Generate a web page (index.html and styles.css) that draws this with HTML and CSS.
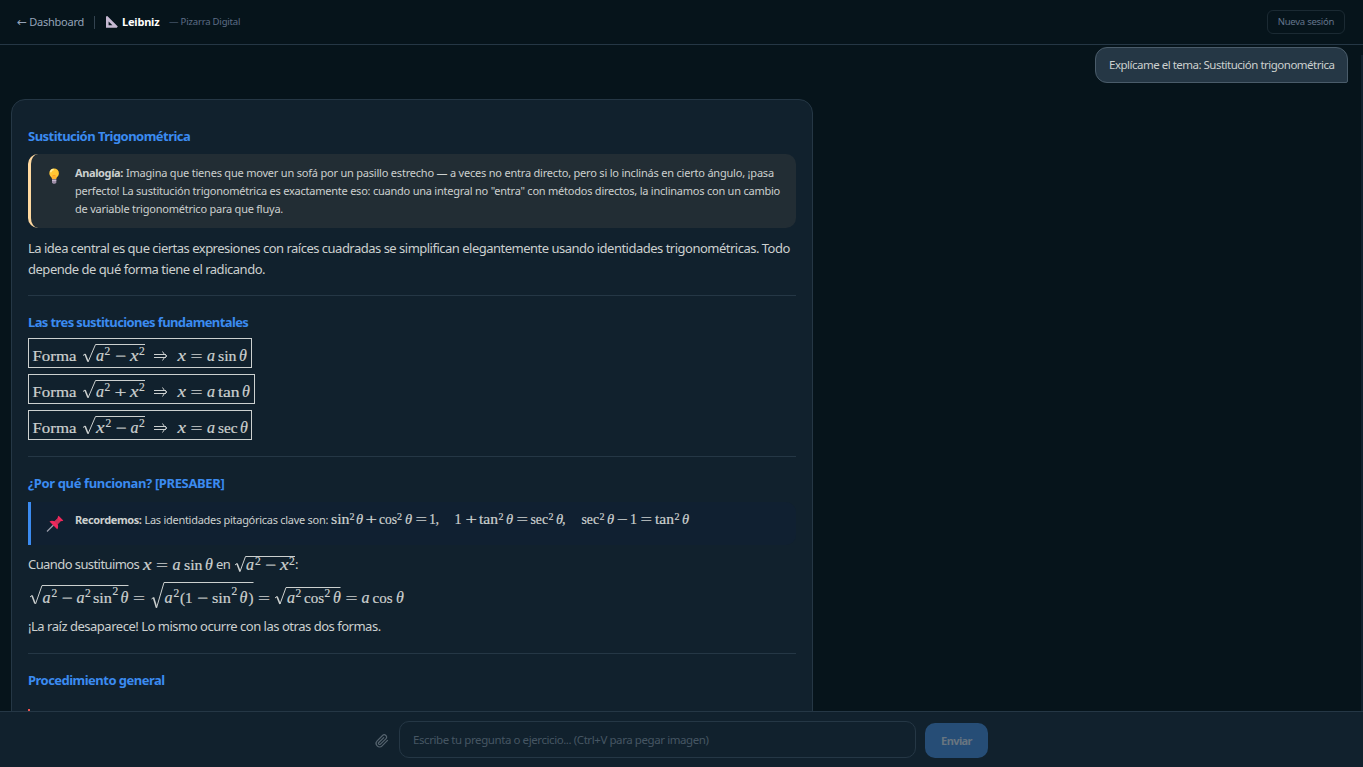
FILE: index.html
```html
<!DOCTYPE html>
<html lang="es">
<head>
<meta charset="utf-8">
<title>Leibniz — Pizarra Digital</title>
<link rel="stylesheet" href="styles.css">
</head>
<body>
<div class="app">
  <header class="topbar">
    <a class="back"><span class="arrow">←</span><span>Dashboard</span></a>
    <span class="divider"></span>
    <svg class="logo" width="12" height="12" viewBox="0 0 12 12"><path fill="#c6b9d2" fill-rule="evenodd" d="M0 0.6 L1.3 0 L11.8 10.6 L10.8 11.8 L0 11.8 Z M2.6 5.6 V9.3 H6.4 Z"/></svg>
    <strong class="brand">Leibniz</strong>
    <span class="tagline">— Pizarra Digital</span>
    <button class="new-session">Nueva sesión</button>
  </header>

  <main class="chat">
    <div class="scrollbar"></div>
    <div class="question">Explícame el tema: Sustitución trigonométrica</div>
    <article class="answer">
      <h3 class="title t1">Sustitución Trigonométrica</h3>
      <div class="callout analogy">
        <svg class="callout-icon" width="18" height="22" viewBox="0 0 18 22"><path d="M4.3 7.2a4.8 4.8 0 0 1 9.6 0c0 2-1 3-2 4.1-.5.7-.6 1.3-.6 1.900H7c0-.7-.2-1.400-.7-2-1-1.100-2-2-2-4z" fill="#ffc634"/><path d="M5.700 6.200a3 3 0 0 1 3-2.700" stroke="#fff0a0" stroke-width="1.500" fill="none"/><path d="M8 13V9l1 1 1-1v4" stroke="#ff9425" stroke-width=".8" fill="none"/><path d="M7 13.200h4.300v3l-1 1.500H8l-1-1.500z" fill="#9b8ba4"/><path d="M7 14.600h4.300" stroke="#d8cce0" stroke-width=".8"/></svg>
        <p class="note"><b>Analogía:</b> <span class="n1">Imagina que tienes que mover un sofá por un pasillo estrecho — a veces no entra directo, pero si lo inclinás en cierto ángulo, ¡pasa</span><br><span class="n2">perfecto! La sustitución trigonométrica es exactamente eso: cuando una integral no "entra" con métodos directos, la inclinamos con un cambio</span><br><span class="n2">de variable trigonométrico para que fluya.</span></p>
      </div>
      <p class="para intro">La idea central es que ciertas expresiones con raíces cuadradas se simplifican elegantemente usando identidades trigonométricas. Todo<br><span class="p2">depende de qué forma tiene el radicando.</span></p>
      <hr>
      <h3 class="title t2">Las tres sustituciones fundamentales</h3>
      <div class="forms">
        <svg class="math boxed" width="224" height="30" viewBox="28 338 224 30">
          <rect x="28.500" y="338.500" width="223" height="29"/>
          <text x="32.500" y="360.500" textLength="44" lengthAdjust="spacingAndGlyphs">Forma</text>
          <path class="tick" d="M83 355.500l2-1.500"/><path class="stem" d="M85 354l3 7.500"/><path class="tick" d="M88 362l7.500-17.500H145"/>
          <text class="v" x="96" y="360.500">a</text><text class="s" x="104.500" y="355">2</text>
          <text x="115" y="360.500" textLength="11" lengthAdjust="spacingAndGlyphs">−</text>
          <text class="v" x="130" y="360.500" textLength="8.500" lengthAdjust="spacingAndGlyphs">x</text><text class="s" x="139" y="355">2</text>
          <path class="tick" d="M154 354.500h12M154 357.500h12M162.500 351.500q1.500 3.500 4.500 4.500q-3 1-4.500 4.500"/>
          <text class="v" x="177.500" y="360.500" textLength="8.500" lengthAdjust="spacingAndGlyphs">x</text><text x="190.500" y="360.500" textLength="12" lengthAdjust="spacingAndGlyphs">=</text>
          <text class="v" x="207" y="360.500">a</text><text x="218" y="360.500" textLength="18.500" lengthAdjust="spacingAndGlyphs">sin</text><text class="v" x="239" y="360.500">θ</text>
        </svg>
        <svg class="math boxed" width="227" height="30" viewBox="28 338 227 30">
          <rect x="28.500" y="338.500" width="226" height="29"/>
          <text x="32.500" y="360.500" textLength="44" lengthAdjust="spacingAndGlyphs">Forma</text>
          <path class="tick" d="M83 355.500l2-1.500"/><path class="stem" d="M85 354l3 7.500"/><path class="tick" d="M88 362l7.500-17.500H145"/>
          <text class="v" x="96" y="360.500">a</text><text class="s" x="104.500" y="355">2</text>
          <text x="114.500" y="360.500" textLength="12" lengthAdjust="spacingAndGlyphs">+</text>
          <text class="v" x="130" y="360.500" textLength="8.500" lengthAdjust="spacingAndGlyphs">x</text><text class="s" x="139" y="355">2</text>
          <path class="tick" d="M154 354.500h12M154 357.500h12M162.500 351.500q1.500 3.500 4.500 4.500q-3 1-4.500 4.500"/>
          <text class="v" x="177.500" y="360.500" textLength="8.500" lengthAdjust="spacingAndGlyphs">x</text><text x="190.500" y="360.500" textLength="12" lengthAdjust="spacingAndGlyphs">=</text>
          <text class="v" x="207" y="360.500">a</text><text x="218" y="360.500" textLength="21.500" lengthAdjust="spacingAndGlyphs">tan</text><text class="v" x="242" y="360.500">θ</text>
        </svg>
        <svg class="math boxed" width="224" height="30" viewBox="28 338 224 30">
          <rect x="28.500" y="338.500" width="223" height="29"/>
          <text x="32.500" y="360.500" textLength="44" lengthAdjust="spacingAndGlyphs">Forma</text>
          <path class="tick" d="M83 355.500l2-1.500"/><path class="stem" d="M85 354l3 7.500"/><path class="tick" d="M88 362l7.500-17.500H145"/>
          <text class="v" x="96" y="360.500" textLength="8.500" lengthAdjust="spacingAndGlyphs">x</text><text class="s" x="105.500" y="355">2</text>
          <text x="115.500" y="360.500" textLength="11" lengthAdjust="spacingAndGlyphs">−</text>
          <text class="v" x="130.500" y="360.500">a</text><text class="s" x="139" y="355">2</text>
          <path class="tick" d="M154 354.500h12M154 357.500h12M162.500 351.500q1.500 3.500 4.500 4.500q-3 1-4.500 4.500"/>
          <text class="v" x="177.500" y="360.500" textLength="8.500" lengthAdjust="spacingAndGlyphs">x</text><text x="190.500" y="360.500" textLength="12" lengthAdjust="spacingAndGlyphs">=</text>
          <text class="v" x="207" y="360.500">a</text><text x="218" y="360.500" textLength="19.500" lengthAdjust="spacingAndGlyphs">sec</text><text class="v" x="240" y="360.500">θ</text>
        </svg>
      </div>
      <hr>
      <h3 class="title t3">¿Por qué funcionan? [PRESABER]</h3>
      <div class="callout reminder">
        <svg class="callout-icon pin" width="18" height="18" viewBox="0 0 18 18"><path d="M1 16.500L7.500 10" stroke="#9a9cab" stroke-width="1.300"/><path d="M3.500 6.500c1.500-1.200 3.600-.9 5-.3l3.300-3.200c-.3-1 .1-1.700.8-2.300l4.700 4.700c-.7.7-1.500 1-2.400.7l-3.200 3.200c.6 1.600.7 3.700-.5 5z" fill="#f0285c"/><path d="M8.700 6.800l3.200-3.200 2.600 2.600-3.200 3.200z" fill="#c92f58"/></svg>
        <p class="note"><b>Recordemos:</b> <span class="n4">Las identidades pitagóricas clave son:</span></p>
        <svg class="math small" width="360" height="22" viewBox="331 509 360 22">
          <text x="331" y="524" textLength="18.500" lengthAdjust="spacingAndGlyphs">sin</text><text class="s" x="349.500" y="520">2</text><text class="v" x="356" y="524">θ</text>
          <text x="365.500" y="524" textLength="11.500" lengthAdjust="spacingAndGlyphs">+</text>
          <text x="379" y="524" textLength="18" lengthAdjust="spacingAndGlyphs">cos</text><text class="s" x="397" y="520">2</text><text class="v" x="405" y="524">θ</text>
          <text x="415.500" y="524" textLength="11.500" lengthAdjust="spacingAndGlyphs">=</text><text x="429" y="524">1</text><text x="435.500" y="524">,</text>
          <text x="454.500" y="524">1</text><text x="465.500" y="524" textLength="11.500" lengthAdjust="spacingAndGlyphs">+</text>
          <text x="479" y="524" textLength="19" lengthAdjust="spacingAndGlyphs">tan</text><text class="s" x="498.500" y="520">2</text><text class="v" x="506" y="524">θ</text>
          <text x="516.500" y="524" textLength="11.500" lengthAdjust="spacingAndGlyphs">=</text>
          <text x="530.500" y="524" textLength="17.500" lengthAdjust="spacingAndGlyphs">sec</text><text class="s" x="548.500" y="520">2</text><text class="v" x="556" y="524">θ</text><text x="562" y="524">,</text>
          <text x="581.500" y="524" textLength="17.500" lengthAdjust="spacingAndGlyphs">sec</text><text class="s" x="599.500" y="520">2</text><text class="v" x="607" y="524">θ</text>
          <text x="617" y="524" textLength="11" lengthAdjust="spacingAndGlyphs">−</text><text x="630" y="524">1</text><text x="640.500" y="524" textLength="11.500" lengthAdjust="spacingAndGlyphs">=</text>
          <text x="655" y="524" textLength="19" lengthAdjust="spacingAndGlyphs">tan</text><text class="s" x="674.500" y="520">2</text><text class="v" x="682" y="524">θ</text>
        </svg>
      </div>
      <div class="para mixed"><span class="p3">Cuando sustituimos</span>
        <svg class="math m-x" width="70" height="24" viewBox="143 552 70 24">
          <text class="v" x="143" y="569.500" textLength="8.500" lengthAdjust="spacingAndGlyphs">x</text><text x="156" y="569.500" textLength="12" lengthAdjust="spacingAndGlyphs">=</text><text class="v" x="172.500" y="569.500">a</text><text x="184" y="569.500" textLength="18.500" lengthAdjust="spacingAndGlyphs">sin</text><text class="v" x="205" y="569.500">θ</text>
        </svg><span class="p4">en</span>
        <svg class="math m-r" width="61" height="24" viewBox="234 552 61 24">
          <path class="tick" d="M235 565l2-1.500"/><path class="stem" d="M237 563.500l3 8"/><path class="tick" d="M240 571.500l5.500-15H295"/>
          <text class="v" x="246" y="569.500">a</text><text class="s" x="255" y="564.500">2</text><text x="265" y="569.500" textLength="11" lengthAdjust="spacingAndGlyphs">−</text><text class="v" x="280" y="569.500" textLength="8.500" lengthAdjust="spacingAndGlyphs">x</text><text class="s" x="289" y="564.500">2</text>
        </svg><span>:</span>
      </div>
      <svg class="math display" width="380" height="32" viewBox="28.500 579 380 32">
        <path class="tick" d="M30.500 597l2-1.500"/><path class="stem" d="M32.500 595.500l3 8"/><path class="tick" d="M36 604l6.500-18.500H129"/>
        <text class="v" x="43" y="602.500">a</text><text class="s" x="52" y="597">2</text><text x="62" y="602.500" textLength="11" lengthAdjust="spacingAndGlyphs">−</text>
        <text class="v" x="77" y="602.500">a</text><text class="s" x="85.500" y="597">2</text><text x="93.500" y="602.500" textLength="19" lengthAdjust="spacingAndGlyphs">sin</text><text class="s" x="113" y="595">2</text><text class="v" x="121" y="602.500">θ</text>
        <text x="133.500" y="602.500" textLength="12" lengthAdjust="spacingAndGlyphs">=</text>
        <path class="tick" d="M152 599l2-1.500"/><path class="stem" d="M154 597.500l3 10"/><path class="tick" d="M157 608l7.500-25.500H254"/>
        <text class="v" x="165" y="602.500">a</text><text class="s" x="174" y="597">2</text><text x="180.500" y="602.500">(</text><text x="185.500" y="602.500">1</text><text x="197.500" y="602.500" textLength="11" lengthAdjust="spacingAndGlyphs">−</text>
        <text x="212.500" y="602.500" textLength="19" lengthAdjust="spacingAndGlyphs">sin</text><text class="s" x="232" y="595">2</text><text class="v" x="240" y="602.500">θ</text><text x="249" y="602.500">)</text>
        <text x="258.500" y="602.500" textLength="12" lengthAdjust="spacingAndGlyphs">=</text>
        <path class="tick" d="M275.500 598l2-1.500"/><path class="stem" d="M277.500 596.500l3 7.500"/><path class="tick" d="M280.500 604l6-16.500H341"/>
        <text class="v" x="287.500" y="602.500">a</text><text class="s" x="296" y="597">2</text><text x="304.500" y="602.500" textLength="20" lengthAdjust="spacingAndGlyphs">cos</text><text class="s" x="325" y="597">2</text><text class="v" x="333.500" y="602.500">θ</text>
        <text x="346" y="602.500" textLength="12" lengthAdjust="spacingAndGlyphs">=</text><text class="v" x="362" y="602.500">a</text><text x="373" y="602.500" textLength="20" lengthAdjust="spacingAndGlyphs">cos</text><text class="v" x="396.500" y="602.500">θ</text>
      </svg>
      <p class="para closing">¡La raíz desaparece! Lo mismo ocurre con las otras dos formas.</p>
      <hr>
      <h3 class="title t4">Procedimiento general</h3>
      <div class="warning"></div>
    </article>
  </main>

  <footer class="composer">
    <svg class="clip" width="14" height="14" viewBox="0 0 24 24"><path d="M21.400 11.050l-9.190 9.190a6 6 0 0 1-8.490-8.490l9.190-9.190a4 4 0 0 1 5.660 5.660l-9.200 9.190a2 2 0 0 1-2.830-2.830l8.490-8.480"/></svg>
    <div class="field">Escribe tu pregunta o ejercicio... (Ctrl+V para pegar imagen)</div>
    <button class="send">Enviar</button>
  </footer>
</div>
</body>
</html>
```
FILE: styles.css
```css
* { box-sizing: border-box; }
body { margin: 0; background: #06141b; color: #ccd0cf; font-family: "Noto Sans", sans-serif; font-size: 13px; overflow: hidden; }
.app { display: flex; flex-direction: column; width: 1363px; height: 767px; white-space: nowrap; }
p, h3 { margin: 0; }
button { font-family: inherit; background: none; }

.topbar { display: flex; align-items: center; height: 45px; flex: none; padding: 0 18px 0 17px; border-bottom: 1px solid #253745; }
.back { display: flex; align-items: center; width: 67px; padding-bottom: 1px; color: #94a3b8; font-size: 11px; letter-spacing: -.25px; }
.arrow { width: 13px; font-family: "DejaVu Sans", sans-serif; font-size: 12px; }
.divider { width: 1px; height: 13px; margin-left: 10px; background: #334350; }
.logo { margin-left: 11px; }
.brand { margin-left: 4px; width: 38px; padding-bottom: 1px; color: #fff; font-size: 11px; letter-spacing: -.2px; }
.tagline { margin-left: 9px; padding-bottom: 1px; color: #5d6d86; font-size: 9.500px; letter-spacing: -.18px; }
.new-session { margin-left: auto; width: 78px; height: 24px; padding: 0 0 1px; border: 1px solid #1b2a33; border-radius: 6px; color: #64748b; font-size: 9.500px; letter-spacing: -.25px; }

.chat { position: relative; flex: 1; min-height: 0; overflow: hidden; display: flex; flex-direction: column; padding: 2px 15px 0 11px; }
.scrollbar { position: absolute; right: 0; top: 10px; width: 2px; height: 656px; background: #11212d; }
.question { align-self: flex-end; flex: none; width: 253px; height: 36px; line-height: 34px; padding-left: 13px; border: 1px solid #4a5c6a; border-radius: 12px 12px 2px 12px; background: #253745; font-size: 11.500px; letter-spacing: -.5px; }
.answer { flex: none; width: 802px; height: 640px; margin-top: 16px; padding: 27px 16px 0; border: 1px solid #253745; border-radius: 14px; background: #11212d; }
.title { height: 20px; line-height: 18px; color: #3b8bf0; font-size: 13px; font-weight: 700; letter-spacing: -.53px; }
.callout { display: flex; border-left: 3px solid #3b8bf0; }
.callout-icon { flex: none; }
.note { font-size: 11px; line-height: 18px; }
.note b { letter-spacing: -.38px; }
.n1 { letter-spacing: -.206px; }
.n2 { letter-spacing: -.23px; }
.n4 { letter-spacing: -.28px; }
.analogy { height: 74px; margin-top: 7px; padding: 10px 0 0 14px; border-color: #ffd9a0; border-radius: 10px; background: #222d34; }
.analogy .callout-icon { margin: 2px 12px 0 0; }
.para { font-size: 13px; line-height: 21px; letter-spacing: -.48px; }
.intro { margin-top: 10px; letter-spacing: -.505px; }
.p2 { letter-spacing: -.48px; }
.p3 { width: 111px; letter-spacing: -.58px; }
hr { height: 1px; margin: 0; border: 0; background: #253745; }
.intro + hr { margin-top: 15px; }
.t2, .t3, .t4 { margin-top: 17px; }
.t2 { letter-spacing: -.61px; }
.t3 { letter-spacing: -.37px; }
.forms { display: flex; flex-direction: column; gap: 6px; margin: 5px 0 16px; }
.reminder { height: 43px; margin-top: 8px; padding: 9px 0 0 15px; border-radius: 0 10px 10px 0; background: #102031; }
.reminder .callout-icon { margin: 4px 11px 0 0; }
.small { margin: -2px 0 0 3px; }
.mixed { display: flex; align-items: center; height: 24px; margin-top: 7px; }
.m-x { margin-left: 4px; }
.p4 { margin-left: 3px; width: 15px; }
.m-r { margin-left: 3px; }
.display { display: block; margin-top: 3px; }
.closing { margin-top: 5px; }
.closing + hr { margin-top: 16px; }
.warning { width: 2px; height: 20px; margin-top: 18px; background: #ef5350; }

.math { display: block; flex: none; overflow: visible; font-family: "Liberation Serif", serif; font-size: 15px; fill: #ccd0cf; letter-spacing: 0; }
.math text { white-space: pre; stroke: #ccd0cf; stroke-width: .2; }
.math .v { font-style: italic; font-size: 16px; }
.math .s { font-size: 11.500px; }
.math.small { font-size: 14px; }
.math.small .v { font-size: 14.500px; }
.math.small .s { font-size: 10px; }
.math rect, .math .tick, .math .stem { fill: none; stroke: #ccd0cf; stroke-width: 1; }
.math .stem { stroke-width: 1.600; }

.composer { display: flex; flex: none; height: 56px; padding-left: 375px; border-top: 1px solid #253745; background: #11212d; }
.clip { margin: 22px 10px 0 0; fill: none; stroke: #56646f; stroke-width: 2; stroke-linecap: round; stroke-linejoin: round; }
.field { width: 517px; height: 37px; margin-top: 9px; padding-left: 13px; line-height: 36px; border: 1px solid #253745; border-radius: 10px; color: #465663; font-size: 11.500px; letter-spacing: -.42px; }
.send { width: 63px; height: 35px; margin: 11px 0 0 9px; padding: 0; border: 0; border-radius: 10px; background: #264d76; color: #687580; font-size: 11px; font-weight: 700; letter-spacing: -.6px; }
```
